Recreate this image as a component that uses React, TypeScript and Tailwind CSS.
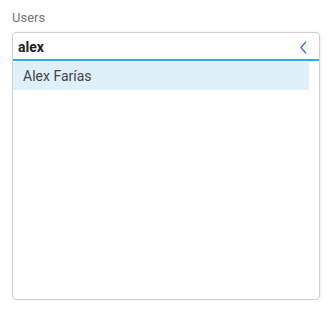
import React, { useState } from 'react';

export default function App() {
  const [query, setQuery] = useState('alex');

  return (
    <div className="w-[336px] h-[318px] bg-white pt-[9px] px-[12px]" style={{ fontFamily: 'Roboto, "Noto Sans", sans-serif' }}>
      <label className="block text-[13px] leading-[18px] text-[#757575] mb-[5px]">Users</label>
      <div className="w-[308px] h-[268px] border border-[#cfcfcf] rounded-[4px] shadow-[1px_0_3px_rgba(0,0,0,0.06)] overflow-hidden">
        <div className="flex items-center h-[28px] border-b-2 border-[#23b3e3] pl-[5px] pr-[12px] pt-[3px]">
          <input
            value={query}
            onChange={(e) => setQuery(e.target.value)}
            className="flex-1 min-w-0 outline-none bg-transparent text-[14px] font-bold text-[#222]"
          />
          <svg width="7" height="13" viewBox="0 0 7 13" fill="none">
            <path d="M6 0.8L0.9 6.5 6 12.2" stroke="#3d6fd1" strokeWidth="1.4" />
          </svg>
        </div>
        <div className="pt-[1px] pr-[10px]">
          <div className="h-[28px] flex items-center pl-[10px] bg-[#dff0fa] text-[14px] text-[#444]">
            Alex Farías
          </div>
        </div>
      </div>
    </div>
  );
}
